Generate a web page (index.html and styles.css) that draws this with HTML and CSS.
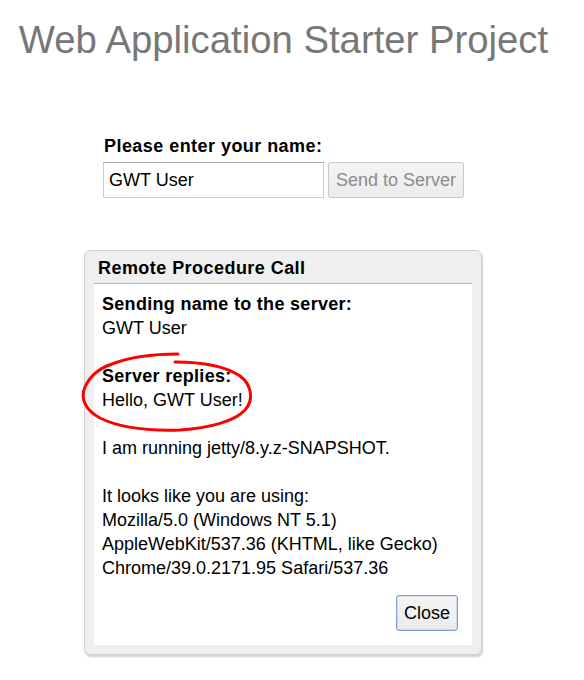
FILE: index.html
```html
<!DOCTYPE html>
<html>
<head>
<meta charset="utf-8">
<link rel="stylesheet" href="styles.css">
</head>
<body>
<div class="page">
  <h1 class="title">Web Application Starter Project</h1>
  <div class="form">
    <div class="form-label">Please enter your name:</div>
    <div class="form-row">
      <div class="text-box">GWT User</div>
      <div class="btn btn-disabled">Send to Server</div>
    </div>
  </div>
  <div class="dialog">
    <div class="dialog-caption">Remote Procedure Call</div>
    <div class="dialog-content">
      <div class="line bold">Sending name to the server:</div>
      <div class="line">GWT User</div>
      <div class="line">&nbsp;</div>
      <div class="line bold">Server replies:</div>
      <div class="line">Hello, GWT User!</div>
      <div class="line">&nbsp;</div>
      <div class="line">I am running jetty/8.y.z-SNAPSHOT.</div>
      <div class="line">&nbsp;</div>
      <div class="line">It looks like you are using:</div>
      <div class="line">Mozilla/5.0 (Windows NT 5.1)</div>
      <div class="line">AppleWebKit/537.36 (KHTML, like Gecko)</div>
      <div class="line">Chrome/39.0.2171.95 Safari/537.36</div>
      <div class="dialog-actions">
        <div class="btn btn-focus">Close</div>
      </div>
    </div>
  </div>
  <svg class="scribble" width="584" height="680" viewBox="0 0 584 680">
    <path d="M175,362 C200,362 225,366 240,376 C252,385 254,400 245,410 C235,421 210,428 180,430 C150,431 120,428 100,418 C85,410 80,398 85,387 C90,376 100,368 112,364 C130,357 155,354 178,354" fill="none" stroke="#ff0000" stroke-width="3" stroke-linecap="round" stroke-linejoin="round"/>
  </svg>
</div>
</body>
</html>
```
FILE: styles.css
```css
html, body {
  margin: 0;
  padding: 0;
  background: #ffffff;
}

.page {
  position: relative;
  width: 567px;
  min-height: 680px;
  padding-top: 18px;
  box-sizing: border-box;
  font-family: "Liberation Sans", Arial, sans-serif;
  font-size: 18px;
  line-height: 24px;
  color: #000;
}

.title {
  margin: 0;
  font-size: 38.3px;
  line-height: 44px;
  font-weight: normal;
  color: #777777;
  text-align: center;
}

.form {
  width: 361px;
  margin: 72px auto 0;
}

.form-label {
  font-weight: bold;
  letter-spacing: 0.45px;
  margin-bottom: 4px;
  padding-left: 1px;
}

.form-row {
  display: flex;
  gap: 4px;
}

.text-box {
  box-sizing: border-box;
  width: 221px;
  height: 36px;
  padding: 5px 5px;
  border: 1px solid #cccccc;
  border-top-color: #a9a9a9;
  background: #fff;
}

.btn {
  box-sizing: border-box;
  height: 36px;
  padding: 5px 0;
  border-radius: 3px;
  white-space: nowrap;
  text-align: center;
  background: linear-gradient(#f4f4f4, #ececec);
}

.btn-disabled {
  width: 136px;
  color: #8c8c8c;
  border: 1px solid #c8c8c8;
}

.btn-focus {
  width: 62px;
  border: 1px solid #7d9dd8;
  box-shadow: inset 0 0 0 1px rgba(125, 157, 216, 0.25);
}

.dialog {
  box-sizing: border-box;
  width: 398px;
  margin: 52px 0 0 84px;
  padding: 0 9px 9px;
  border: 1px solid #cfcfcf;
  border-radius: 6px;
  background: #efefef;
  box-shadow: 1px 2px 2px rgba(0, 0, 0, 0.18);
}

.dialog-caption {
  padding: 5px 4px 3px;
  font-weight: bold;
  letter-spacing: 0.45px;
}

.dialog-content {
  background: #fff;
  border-top: 1px solid #bbbbbb;
  padding: 8px 14px 14px 8px;
}

.bold {
  font-weight: bold;
  letter-spacing: 0.3px;
}

.dialog-actions {
  display: flex;
  justify-content: flex-end;
  margin-top: 15px;
}

.scribble {
  position: absolute;
  left: 0;
  top: 0;
  pointer-events: none;
}
```
